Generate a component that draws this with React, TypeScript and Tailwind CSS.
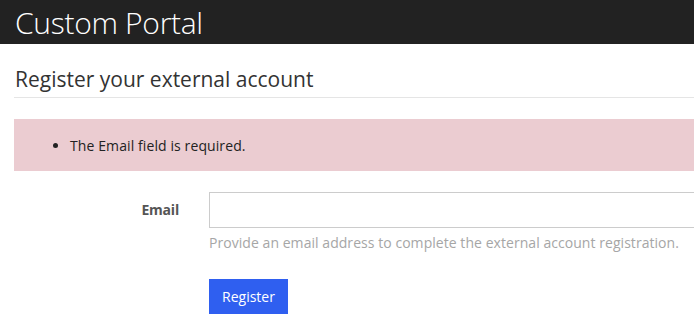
export default function App() {
  return (
    <div className="w-[694px] h-[328px] overflow-hidden bg-white" style={{ fontFamily: '"Open Sans", "Noto Sans", sans-serif' }}>
      <div className="h-[44px] bg-[#222222] flex items-center px-[15px]">
        <span className="text-white text-[30px] font-light leading-none tracking-[-0.3px] pt-[1px]">Custom Portal</span>
      </div>
      <div className="w-[1000px] pl-[14px]">
        <div className="pt-[22px] pb-[4px] border-b border-[#e5e5e5]">
          <h1 className="pl-[1px] text-[21px] leading-[27px] text-[#333333] tracking-[0px]">Register your external account</h1>
        </div>
        <div className="mt-[21px] h-[52px] bg-[#ebccd1] flex items-center">
          <ul className="list-disc pl-[56px] text-[14px] text-[#222222] tracking-[0.1px]">
            <li>The Email field is required.</li>
          </ul>
        </div>
        <div className="mt-[21px] flex">
          <label className="w-[165px] text-right font-bold text-[14px] text-[#555555] leading-[36px] tracking-[-0.2px]">Email</label>
          <div className="ml-[30px] flex-1">
            <input type="text" className="block w-full h-[36px] border border-[#cccccc] outline-none" />
            <p className="mt-[5px] text-[14px] leading-[20px] text-[#a6a6a6] tracking-[0.05px]">Provide an email address to complete the external account registration.</p>
            <button className="mt-[26px] w-[79px] h-[35px] bg-[#2f5ff0] text-white text-[14px] tracking-[0px]">Register</button>
          </div>
        </div>
      </div>
    </div>
  );
}
